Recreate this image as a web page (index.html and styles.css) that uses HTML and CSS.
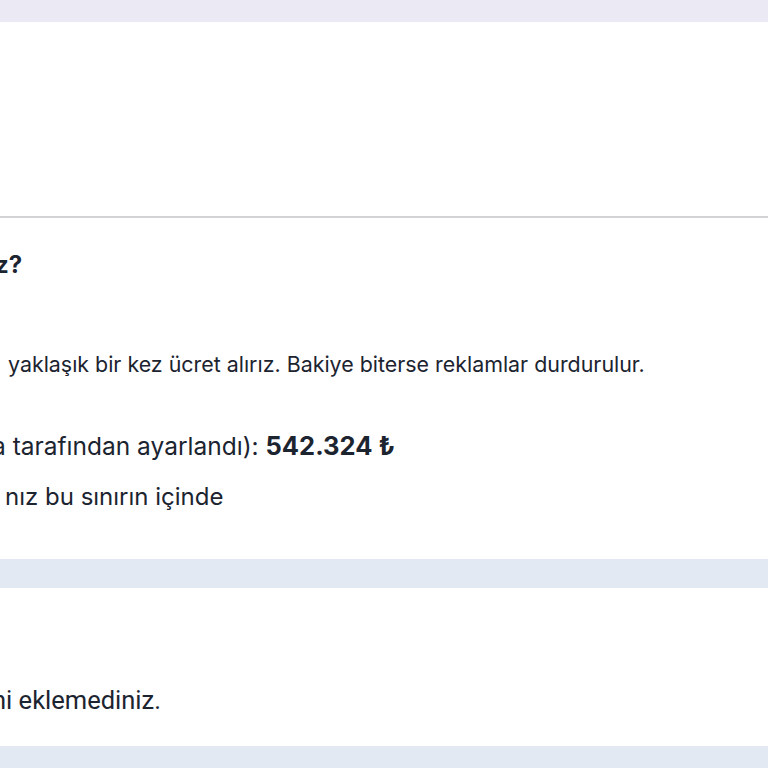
FILE: index.html
```html
<!DOCTYPE html>
<html lang="tr">
<head>
<meta charset="utf-8">
<title>Ödeme ayarları</title>
<link rel="stylesheet" href="styles.css">
</head>
<body>
<div class="page">
  <div class="top-band"></div>
  <section class="card card-head"></section>
  <section class="card card-budget">
    <h2 class="heading">z?</h2>
    <p class="note">yaklaşık bir kez ücret alırız. Bakiye biterse reklamlar durdurulur.</p>
    <p class="limit">a tarafından ayarlandı): <strong>542.324 ₺</strong></p>
    <p class="status">nız bu sınırın içinde</p>
  </section>
  <div class="gap"></div>
  <section class="card card-methods">
    <p class="empty">ni eklemediniz.</p>
  </section>
</div>
</body>
</html>
```

FILE: styles.css
```css
html, body {
  margin: 0;
  padding: 0;
  background: #e3e9f2;
  overflow: hidden;
}
body {
  font-family: Inter, "Noto Sans", sans-serif;
  color: #1c2430;
}
.page {
  width: 768px;
  height: 768px;
  display: flex;
  flex-direction: column;
}
.top-band {
  height: 22px;
  background: #ebe9f3;
}
.card {
  background: #fff;
}
.card-head {
  height: 194px;
  border-bottom: 2px solid #d2d2d4;
}
.card-budget {
  height: 341px;
  padding-top: 32px;
  box-sizing: border-box;
}
.heading {
  margin: 0;
  font-size: 24px;
  line-height: 30px;
  font-weight: 700;
  text-indent: -5px;
}
.note {
  margin: 70px 0 0;
  font-size: 21.4px;
  line-height: 28px;
  padding-left: 8px;
}
.limit {
  margin: 53px 0 0;
  font-size: 24.5px;
  line-height: 30px;
  text-indent: -8px;
}
.limit strong {
  font-weight: 700;
  font-size: 25.5px;
}
.status {
  margin: 21px 0 0;
  font-size: 24px;
  line-height: 30px;
  padding-left: 5px;
}
.gap {
  height: 29px;
}
.card-methods {
  height: 158px;
  padding-top: 97px;
  box-sizing: border-box;
}
.empty {
  margin: 0;
  font-family: Roboto, "Liberation Sans", sans-serif;
  font-size: 25.5px;
  line-height: 30px;
  text-indent: -8px;
}
```
